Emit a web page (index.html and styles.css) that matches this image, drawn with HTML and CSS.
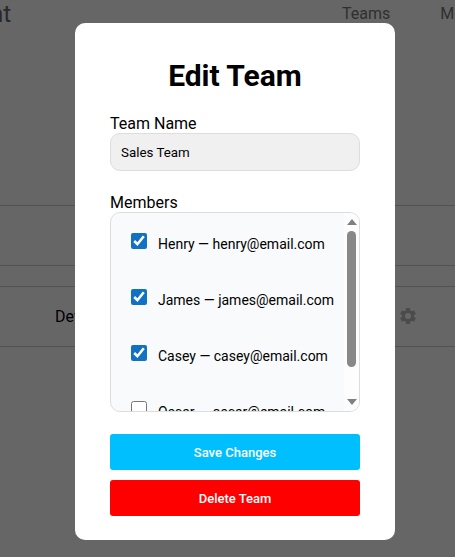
FILE: index.html
```html
<!DOCTYPE html>
<html lang="en">
<head>
<meta charset="utf-8">
<title>Edit Team</title>
<link rel="stylesheet" href="styles.css">
</head>
<body>
<div class="page">
  <header class="topbar">
    <span class="brand">Team Management</span>
    <nav class="nav"><a>Teams</a><a>Members</a></nav>
  </header>
  <div class="table">
    <div class="row row-a"></div>
    <div class="row row-b"></div>
    <div class="row row-c">
      <span class="cell-name">Developers</span>
      <svg class="gear" viewBox="0 0 24 24" width="20" height="20"><path d="M19.14 12.94c.04-.3.06-.61.06-.94 0-.32-.02-.64-.07-.94l2.03-1.58a.49.49 0 0 0 .12-.61l-1.92-3.32a.49.49 0 0 0-.59-.22l-2.39.96c-.5-.38-1.03-.7-1.62-.94l-.36-2.54a.48.48 0 0 0-.48-.41h-3.84c-.24 0-.43.17-.47.41l-.36 2.54c-.59.24-1.13.57-1.62.94l-2.39-.96a.48.48 0 0 0-.59.22L2.74 8.87c-.12.21-.08.47.12.61l2.03 1.58c-.05.3-.09.63-.09.94s.02.64.07.94l-2.03 1.58a.49.49 0 0 0-.12.61l1.92 3.32c.12.22.37.29.59.22l2.39-.96c.5.38 1.03.7 1.62.94l.36 2.54c.05.24.24.41.48.41h3.84c.24 0 .44-.17.47-.41l.36-2.54c.59-.24 1.13-.56 1.62-.94l2.39.96c.22.08.47 0 .59-.22l1.92-3.32c.12-.22.07-.47-.12-.61l-2.01-1.58zM12 15.6A3.6 3.6 0 1 1 12 8.4a3.6 3.6 0 0 1 0 7.2z"/></svg>
    </div>
  </div>
</div>
<div class="overlay">
  <form class="modal">
    <h2 class="title">Edit Team</h2>
    <label class="field-label" for="team-name">Team Name</label>
    <input class="text-input" id="team-name" type="text" value="Sales Team">
    <div class="field-label members-label">Members</div>
    <div class="member-box">
      <div class="member-list">
        <label class="member"><input class="check" type="checkbox" checked><span>Henry — henry@email.com</span></label>
        <label class="member"><input class="check" type="checkbox" checked><span>James — james@email.com</span></label>
        <label class="member"><input class="check" type="checkbox" checked><span>Casey — casey@email.com</span></label>
        <label class="member"><input class="check" type="checkbox"><span>Oscar — oscar@email.com</span></label>
      </div>
      <div class="scrollbar" aria-hidden="true">
        <span class="arrow arrow-up"></span>
        <span class="thumb"></span>
        <span class="arrow arrow-down"></span>
      </div>
    </div>
    <button class="btn btn-save" type="button">Save Changes</button>
    <button class="btn btn-delete" type="button">Delete Team</button>
  </form>
</div>
</body>
</html>
```
FILE: styles.css
```css
* { box-sizing: border-box; }
html, body { margin: 0; height: 100%; overflow: hidden; }
body { font-family: Roboto, "Liberation Sans", sans-serif; background: #fff; color: #000; }

.page { width: 455px; height: 557px; overflow: hidden; }
.topbar { display: flex; align-items: center; height: 27px; white-space: nowrap; }
.brand { font-size: 24px; color: #666; margin-left: -249px; width: 260px; flex: none; text-align: right; }
.nav { display: flex; gap: 50px; margin-left: 331px; font-size: 16px; color: #777; flex: none; }
.table { margin-top: 178px; }
.row { border-top: 1px solid #ccc; }
.row-a { height: 60px; }
.row-b { height: 21px; }
.row-c { height: 61px; border-bottom: 1px solid #ccc; display: flex; align-items: center; padding-left: 55px; font-size: 16px; color: #000; }
.cell-name { width: 343px; flex: none; }
.gear { fill: #bbb; flex: none; margin-top: -1px; }

.overlay { position: fixed; top: 0; left: 0; width: 470px; height: 557px; background: rgba(0, 0, 0, .6); display: flex; justify-content: center; align-items: flex-start; padding-top: 23px; }
.modal { width: 320px; background: #fff; border-radius: 10px; padding: 35px 35px 24px; display: flex; flex-direction: column; }
.modal > * { flex: none; }
.title { margin: 0 0 20px; font-size: 30px; line-height: 36px; font-weight: 700; text-align: center; }
.field-label { font-size: 16px; line-height: 19px; color: #000; }
.text-input { width: 100%; height: 38px; padding: 0 10px; font: 13.33px Roboto, sans-serif; color: #000; background: #f0f0f0; border: 1px solid #ddd; border-radius: 10px; outline: none; }
.members-label { margin-top: 22px; }
.member-box { position: relative; height: 200px; background: #f9fafc; border: 1px solid #ddd; border-radius: 10px; overflow: hidden; }
.member-list { height: 100%; overflow: hidden; padding: 12px 0 0 20px; }
.member { display: flex; align-items: flex-start; gap: 11px; height: 56px; font-size: 14px; line-height: 16px; color: #000; }
.member span { margin-top: 11px; white-space: nowrap; }
.check { width: 16px; height: 16px; margin: 8px 0 0; accent-color: #1272c2; flex: none; }
.scrollbar { position: absolute; top: 0; right: 0; bottom: 0; width: 15px; background: #fdfdfd; display: flex; flex-direction: column; align-items: center; padding: 6px 0 6px; }
.arrow { flex: none; width: 0; height: 0; border-left: 5px solid transparent; border-right: 5px solid transparent; }
.arrow-up { border-bottom: 6px solid #808080; }
.arrow-down { border-top: 6px solid #808080; margin-top: 32px; }
.thumb { flex: none; width: 9px; height: 136px; margin-top: 6px; border-radius: 5px; background: #888; }
.btn { width: 100%; height: 36px; border: 0; border-radius: 3px; color: #fff; font: 500 13px Roboto, sans-serif; }
.btn-save { margin-top: 22px; background: #00bfff; }
.btn-delete { margin-top: 10px; background: #f00; }
```
